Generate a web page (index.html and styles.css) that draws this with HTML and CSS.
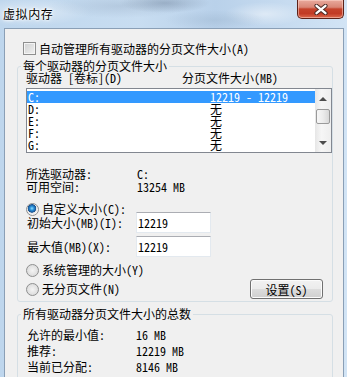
FILE: index.html
```html
<!DOCTYPE html>
<html lang="zh-CN">
<head>
    <meta charset="UTF-8">
    <meta name="viewport" content="width=device-width, initial-scale=1.0">
    <title>虚拟内存</title>
    <link rel="stylesheet" href="styles.css">
</head>
<body>
<div class="window">
    <div class="titlebar">
        <span class="title">虚拟内存</span>
        <div class="close-btn">
            <svg width="14" height="11" viewBox="0 0 14 11">
                <path d="M2.5 1.8 L11.5 9.2 M11.5 1.8 L2.5 9.2" stroke="#4a2a25" stroke-width="4.2" stroke-linecap="round"/>
                <path d="M2.5 1.8 L11.5 9.2 M11.5 1.8 L2.5 9.2" stroke="#ffffff" stroke-width="2.3" stroke-linecap="round"/>
            </svg>
        </div>
    </div>

    <div class="client">
        <label class="check-row"><span class="checkbox"></span>自动管理所有驱动器的分页文件大小(A)</label>

        <fieldset class="group group-drives">
            <legend>每个驱动器的分页文件大小</legend>
            <div class="list-head">
                <span class="head-drive">驱动器 [卷标](D)</span>
                <span>分页文件大小(MB)</span>
            </div>
            <div class="listbox">
                <div class="rows">
                    <div class="row selected"><span class="drive">C:</span><span>12219 - 12219</span></div>
                    <div class="row"><span class="drive">D:</span><span>无</span></div>
                    <div class="row"><span class="drive">E:</span><span>无</span></div>
                    <div class="row"><span class="drive">F:</span><span>无</span></div>
                    <div class="row"><span class="drive">G:</span><span>无</span></div>
                </div>
                <div class="scrollbar">
                    <div class="sb-btn sb-up"><span class="arrow-up"></span></div>
                    <div class="sb-thumb"></div>
                    <div class="sb-track"></div>
                    <div class="sb-btn sb-down"><span class="arrow-down"></span></div>
                </div>
            </div>

            <div class="info">
                <div class="info-row"><span class="info-label">所选驱动器:</span><span>C:</span></div>
                <div class="info-row"><span class="info-label">可用空间:</span><span>13254 MB</span></div>
            </div>

            <div class="radio-row custom-row"><span class="radio checked"></span>自定义大小(C):</div>
            <div class="size-row first">
                <span class="size-label">初始大小(MB)(I):</span>
                <div class="textbox">12219</div>
            </div>
            <div class="size-row">
                <span class="size-label">最大值(MB)(X):</span>
                <div class="textbox">12219</div>
            </div>

            <div class="radio-row system-row"><span class="radio"></span>系统管理的大小(Y)</div>
            <div class="bottom-row">
                <div class="radio-row"><span class="radio"></span>无分页文件(N)</div>
                <button type="button" class="set-btn">设置(S)</button>
            </div>
        </fieldset>

        <fieldset class="group group-total">
            <legend>所有驱动器分页文件大小的总数</legend>
            <div class="totals">
                <div class="info-row"><span class="total-label">允许的最小值:</span><span>16 MB</span></div>
                <div class="info-row"><span class="total-label">推荐:</span><span>12219 MB</span></div>
                <div class="info-row"><span class="total-label">当前已分配:</span><span>8146 MB</span></div>
            </div>
        </fieldset>
    </div>
</div>
</body>
</html>
```

FILE: styles.css
```css
* { box-sizing: border-box; }
body { margin: 0; font-family: "Noto Sans Mono CJK SC", "Noto Sans CJK SC", sans-serif; font-size: 12px; color: #000; }

/* window frame + aero title bar */
.window {
    width: 347px; height: 377px; overflow: hidden;
    display: flex; flex-direction: column;
    background:
        radial-gradient(ellipse 45px 10px at 165px 3px, rgba(110, 130, 155, 0.45), transparent),
        radial-gradient(ellipse 70px 12px at 120px 6px, rgba(140, 160, 185, 0.3), transparent),
        radial-gradient(ellipse 50px 10px at 215px 20px, rgba(150, 175, 200, 0.35), transparent),
        radial-gradient(ellipse 60px 14px at 30px 12px, rgba(255, 255, 255, 0.45), transparent),
        radial-gradient(ellipse 40px 12px at 265px 14px, rgba(255, 255, 255, 0.45), transparent),
        linear-gradient(90deg, #bed6ed, #c8ddf1 40%, #b9d1ea 62%, #d2e4f5);
}
.titlebar { height: 28px; flex: none; display: flex; justify-content: space-between; align-items: flex-start; padding: 0 3px; }
.title {
    margin-top: 7px; line-height: 13px; font-family: "Noto Sans CJK SC", sans-serif;
    font-size: 12px; letter-spacing: 0.6px;
    text-shadow: 0 0 5px #fff, 0 0 3px #fff, 0 0 2px #fff;
}
.close-btn {
    width: 47px; height: 19px;
    display: flex; align-items: center; justify-content: center;
    border: 1px solid #5c2219; border-top: none; border-radius: 0 0 5px 5px;
    background: linear-gradient(#e9aa9d 0%, #d98676 40%, #c5432c 50%, #c23b25 75%, #dc6a4e 100%);
    box-shadow: inset 0 0 0 1px rgba(255, 220, 210, 0.5);
}

.client {
    flex: 1; margin: 0 3px 0 4px;
    border: 1px solid #8a9fb6; border-bottom: none;
    background: #f0f0f0;
}

/* checkbox */
.check-row { display: flex; align-items: center; gap: 2px; margin: 13px 0 0 18px; line-height: 13px; height: 13px; }
.checkbox {
    width: 13px; height: 13px; border: 1px solid #8e8f8f;
    background: linear-gradient(135deg, #cfd0d1, #f1f1f1);
    box-shadow: inset 0 0 0 1px #f4f4f4;
    margin-right: 1px;
}

/* group boxes */
.group {
    margin: 5px 10px 0 12px; padding: 0 1px 2px 8px;
    border: 1px solid #d5dfe5; border-radius: 3px;
    min-width: 0;
}
.group legend { margin-left: -5px; padding: 0 2px; line-height: 12px; font-size: 12px; }
.group-total { margin-top: 6px; height: 120px; }

.list-head { display: flex; height: 12px; line-height: 12px; }
.head-drive { width: 156px; }

/* list box */
.listbox {
    margin-top: 4px; height: 65px; width: 306px;
    border: 1px solid #828790; background: #fff;
    display: flex;
}
.rows { flex: 1; padding-top: 2px; }
.row { display: flex; height: 12px; line-height: 12px; }
.row .drive { width: 183px; padding-left: 1px; }
.row.selected { background: #3399ff; color: #fff; }

.scrollbar {
    width: 16px; display: flex; flex-direction: column; align-items: center;
    background: linear-gradient(90deg, #e6e6e6, #f6f6f6 40%, #eeeeee);
}
.sb-btn { width: 16px; display: flex; align-items: center; justify-content: center; flex: none; }
.sb-up { height: 20px; }
.sb-down { height: 18px; }
.sb-track { flex: 1; }
.arrow-up { width: 0; height: 0; border-left: 4px solid transparent; border-right: 4px solid transparent; border-bottom: 4px solid #4d4d4d; }
.arrow-down { width: 0; height: 0; border-left: 4px solid transparent; border-right: 4px solid transparent; border-top: 4px solid #4d4d4d; }
.sb-thumb {
    width: 14px; height: 15px; flex: none;
    border: 1px solid #9a9a9a; border-radius: 2px;
    background: linear-gradient(90deg, #f7f7f7, #ececec 50%, #d8d8d8);
}

/* drive info */
.info { margin-top: 14px; line-height: 13px; }
.info-row { display: flex; }
.info-label { width: 111px; }

/* radios */
.radio-row { display: flex; align-items: center; gap: 3px; height: 12px; line-height: 12px; }
.radio {
    width: 13px; height: 13px; border-radius: 50%; flex: none;
    border: 1px solid #8e8f8f;
    background: radial-gradient(circle at 50% 50%, #f4f4f4, #d4d4d4);
}
.radio.checked { background: radial-gradient(circle at 45% 40%, #8fe0ff 0, #2a8fd8 2px, #18508f 4px, #e4e4e4 4.5px, #f4f4f4 6px); }
.custom-row { margin-top: 10px; }
.system-row { margin-top: 7px; }

.size-row { display: flex; align-items: center; margin-top: 3px; padding-left: 1px; }
.size-row.first { margin-top: -3px; }
.size-label { width: 109px; }
.textbox {
    width: 75px; height: 21px; padding-left: 1px; line-height: 19px;
    background: #fff;
    border: 1px solid #e3e9ef; border-top-color: #abadb3;
}

.bottom-row { display: flex; justify-content: space-between; align-items: center; margin-top: 3px; padding-right: 8px; }
.set-btn {
    width: 73px; height: 20px; padding: 0;
    font-family: inherit; font-size: 12px; color: #000;
    border: 1px solid #707070; border-radius: 3px;
    background: linear-gradient(#f2f2f2 0%, #ebebeb 50%, #dddddd 50%, #cfcfcf 100%);
    box-shadow: inset 0 0 0 1px #fbfbfb;
}

/* totals */
.totals { padding-top: 7px; line-height: 16px; }
.total-label { width: 110px; padding-left: 1px; }
```
